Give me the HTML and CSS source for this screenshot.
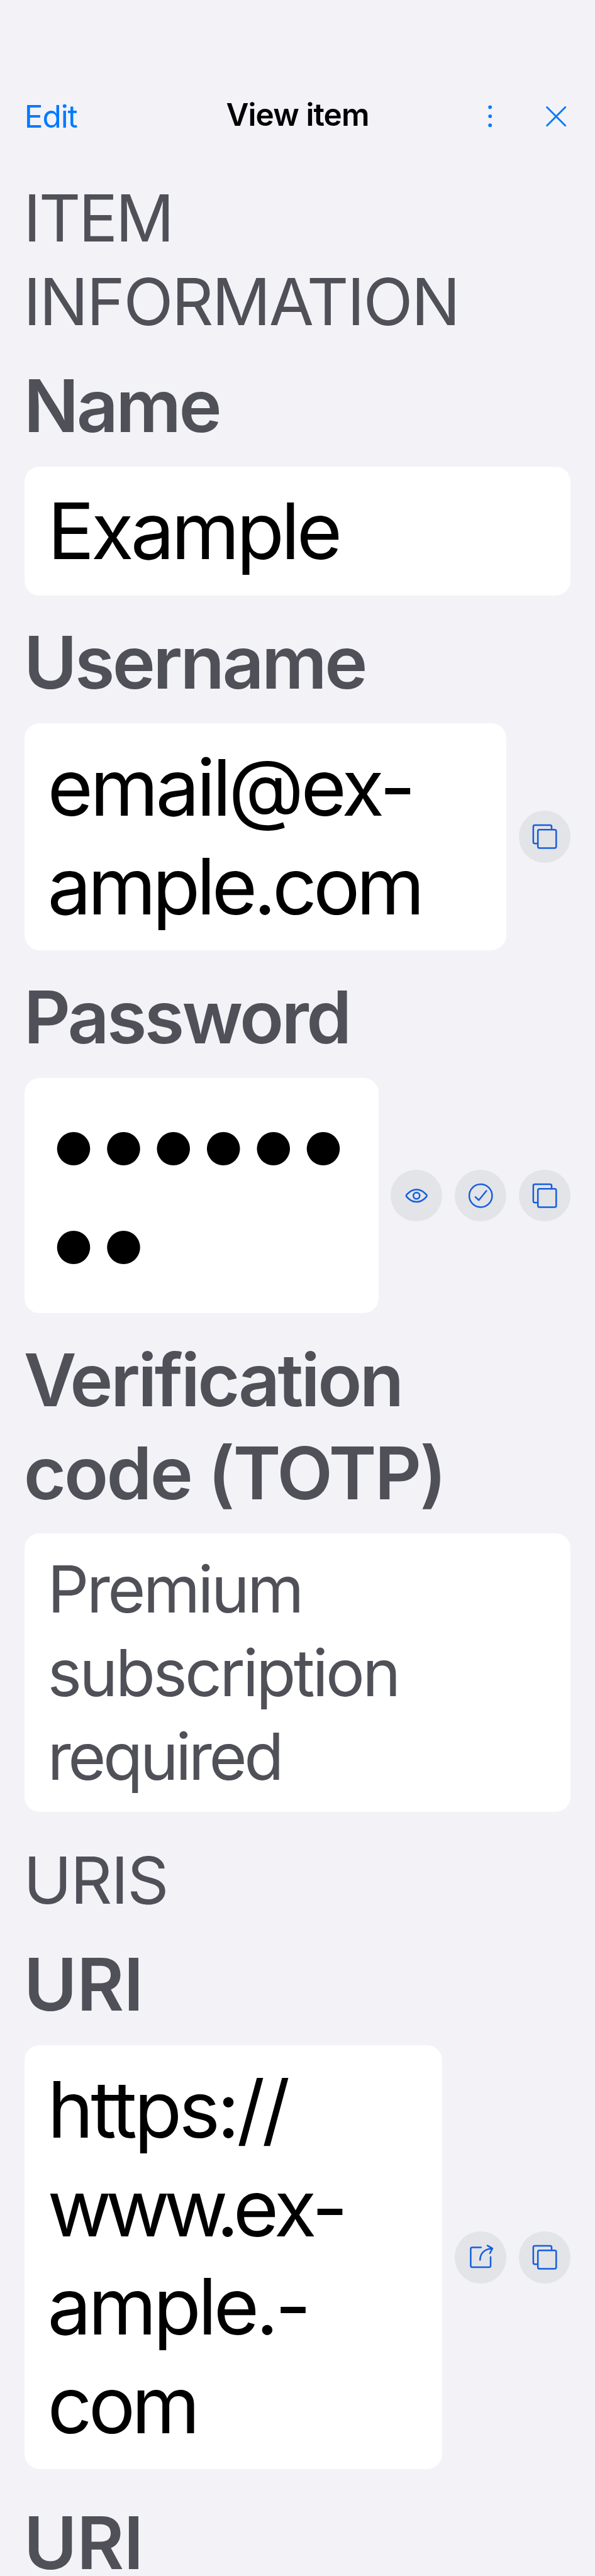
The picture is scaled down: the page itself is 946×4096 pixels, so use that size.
FILE: index.html
```
<!DOCTYPE html>
<html lang="en">
<head>
<meta charset="utf-8">
<title>View item</title>
<link rel="stylesheet" href="styles.css">
</head>
<body>
<svg class="defs" width="0" height="0" aria-hidden="true">
  <symbol id="copy" viewBox="0 0 102 102"><path d="M64.300 37V31.500a3 3 0 0 0-3-3H31.300a3 3 0 0 0-3 3V61.500a3 3 0 0 0 3 3H37"/><rect x="37.300" y="37.500" width="36" height="36" rx="3"/></symbol>
  <symbol id="check" viewBox="0 0 102 102"><circle cx="51" cy="51" r="22.500"/><path d="M40.700 53.700 47.300 59.700 62.300 41.500"/></symbol>
  <symbol id="eye" viewBox="0 0 102 102"><path d="M31.300 49.300Q40 38.800 51 38.800T70.700 49.300Q72 51 70.700 52.700Q62 63.200 51 63.200T31.300 52.700Q30 51 31.300 49.300Z"/><circle cx="51" cy="51" r="6.200"/></symbol>
  <symbol id="share" viewBox="0 0 102 102"><path d="M51.700 31.500H34.400a3 3 0 0 0-3 3V67.400a3 3 0 0 0 3 3H67.500a3 3 0 0 0 3-3V50.400M49.800 56.200C49.800 44 58 34.500 74 33.800M64.300 28 74 33.600 69.200 43"/></symbol>
</svg>
<header class="bar">
  <a class="edit">Edit</a>
  <h1 class="title">View item</h1>
  <div class="tools">
    <svg class="more" viewBox="0 0 8 44"><circle cx="4" cy="4.200" r="3.600"/><circle cx="4" cy="22" r="3.600"/><circle cx="4" cy="39.800" r="3.600"/></svg>
    <svg class="close" viewBox="0 0 40 40"><path d="M2 2 38 38M38 2 2 38"/></svg>
  </div>
</header>
<main class="content">
  <h2 class="section"><span class="tight">ITEM</span><br>INFORMATION</h2>
  <section class="field">
    <h3 class="label">Name</h3>
    <div class="row"><div class="box value">Example</div></div>
  </section>
  <section class="field">
    <h3 class="label">Username</h3>
    <div class="row">
      <div class="box value"><span class="address">email@ex-</span><br><span class="domain">ample.com</span></div>
      <button class="action"><svg><use href="#copy"/></svg></button>
    </div>
  </section>
  <section class="field">
    <h3 class="label">Password</h3>
    <div class="row">
      <div class="box secret">●●●●●●<br>●●</div>
      <button class="action"><svg><use href="#eye"/></svg></button>
      <button class="action"><svg><use href="#check"/></svg></button>
      <button class="action"><svg><use href="#copy"/></svg></button>
    </div>
  </section>
  <section class="field totp">
    <h3 class="label">Verification<br><span class="code">code (TOTP)</span></h3>
    <div class="row"><div class="box note">Premium<br>subscription<br><span class="required">required</span></div></div>
  </section>
  <h2 class="section uris">URIS</h2>
  <section class="field">
    <h3 class="label caps">URI</h3>
    <div class="row">
      <div class="box value"><span class="address">https://</span><br><span class="www">www.</span><span class="address">ex-</span><br>ample.-<br><span class="domain">com</span></div>
      <button class="action"><svg><use href="#share"/></svg></button>
      <button class="action"><svg><use href="#copy"/></svg></button>
    </div>
  </section>
  <section class="field last">
    <h3 class="label caps">URI</h3>
  </section>
</main>
</body>
</html>
```
FILE: styles.css
```
* { box-sizing: border-box; }
html { background: #f2f2f7; }
body {
  margin: 0;
  width: 946px;
  height: 4096px;
  overflow: hidden;
  background: #f2f2f7;
  font-family: Inter, "Liberation Sans", sans-serif;
  color: #505059;
}
.defs { position: absolute; }
h1, h2, h3 { margin: 0; }

.bar {
  display: grid;
  grid-template-columns: 1fr auto 1fr;
  height: 281px;
  padding: 151px 38.8px 0;
  color: #007aff;
  font-size: 49.5px;
  line-height: 62px;
}
.edit { padding-top: 2.5px; letter-spacing: -1.1px; }
.title { font-size: 49.5px; line-height: 62px; font-weight: 600; color: #000; letter-spacing: -0.9px; }
.tools { display: flex; justify-content: flex-end; align-items: flex-start; padding-top: 16px; }
.more { width: 6.5px; height: 35.6px; margin-right: 86.3px; fill: #007aff; }
.close { width: 32.4px; height: 32.4px; margin: 1.6px 6.5px 0 0; fill: none; stroke: #007aff; stroke-width: 3.5; stroke-linecap: round; }

.content { padding: 0 38.8px; }
.section { margin: 0 0 25.5px -1.6px; font-size: 103.3px; line-height: 132.8px; font-weight: 400; letter-spacing: -2.45px; }
.section .tight { letter-spacing: -3.3px; }
.uris { margin-top: 43.2px; letter-spacing: -2px; }
.field { margin-bottom: 33.1px; }
.label { margin: 0 0 22.6px -1.1px; font-size: 115.4px; line-height: 147.5px; font-weight: 600; letter-spacing: -3.65px; }
.label .code { letter-spacing: -2.85px; }
.label.caps { letter-spacing: -0.65px; }
.totp .label { margin-bottom: 21.3px; }
.last { margin: 66.7px 0 0; }
.last .label { margin-bottom: 0; line-height: 100px; }

.row { display: flex; align-items: center; gap: 19.4px; }
.box { flex: 1; min-width: 0; border-radius: 24px; background: #fff; white-space: nowrap; }
.value { padding: 24px 36.8px; font-size: 124.2px; line-height: 156.6px; color: #000; letter-spacing: -5.15px; }
.value .address { letter-spacing: -4.7px; }
.value .domain { letter-spacing: -5.9px; }
.value .www { letter-spacing: -9.1px; }
.note { padding: 23.6px 36.8px 21px; font-size: 103.3px; line-height: 132.8px; letter-spacing: -3.75px; }
.note .required { letter-spacing: -4.5px; }
.secret { height: 373.8px; padding: 35.1px 0 0 46.3px; color: #000; font-size: 70px; line-height: 156.8px; letter-spacing: 15.4px; }

.action { flex: none; width: 82.5px; height: 82.5px; padding: 0; border: 0; border-radius: 50%; background: #e2e4e8; }
.action svg { display: block; width: 82.5px; height: 82.5px; fill: none; stroke: #175ddc; stroke-width: 3.1; stroke-linecap: round; stroke-linejoin: round; }
```
